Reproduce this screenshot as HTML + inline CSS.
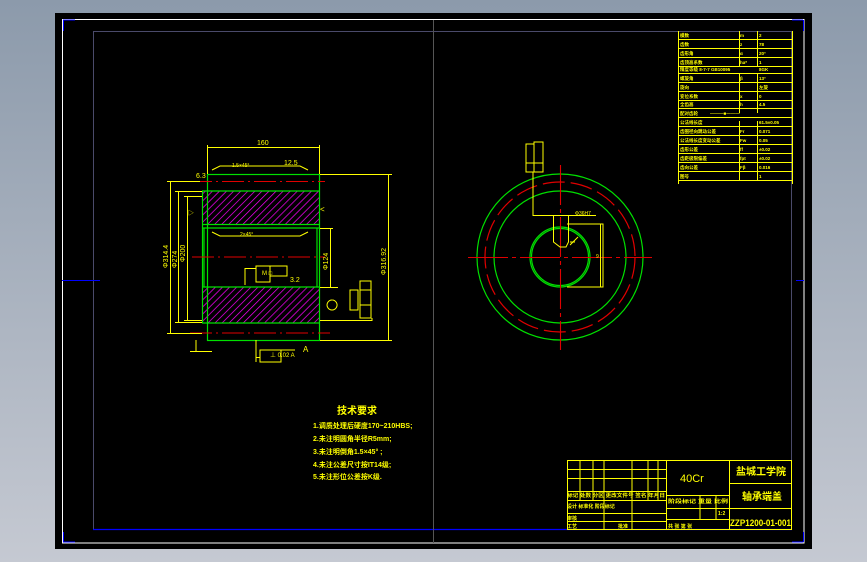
<!DOCTYPE html>
<html><head><meta charset="utf-8"><style>
html,body{margin:0;padding:0}
body{width:867px;height:562px;overflow:hidden;background:linear-gradient(#8c9aab,#c5c9d2)}
svg{display:block}
text{font-family:"Liberation Sans","Noto Sans CJK SC",sans-serif;fill:#ffff00}
</style></head><body>
<svg width="867" height="562" viewBox="0 0 867 562" xmlns="http://www.w3.org/2000/svg">
<defs>
<pattern id="h" width="5" height="5" patternUnits="userSpaceOnUse" patternTransform="rotate(45)">
<rect width="5" height="5" fill="#000"/><line x1="0" y1="0" x2="0" y2="5" stroke="#ff00ff" stroke-width="1.4"/>
</pattern>
</defs>
<rect x="55" y="13" width="757" height="536" fill="#000"/>
<rect x="62.5" y="19.5" width="741.5" height="523.5" fill="none" stroke="#fff" stroke-width="1"/>
<rect x="93.5" y="31.5" width="698" height="498" fill="none" stroke="#4a4a6a" stroke-width="1"/>
<line x1="93" y1="529.5" x2="792" y2="529.5" stroke="#0000ff" stroke-width="1.2"/>
<g stroke="#0000ff" stroke-width="1" fill="none">
<path d="M63 20H75M63.5 20V31M63 542H75M63.5 542V532M803 20H792M803.5 20V31M803 542H792M803.5 542V532"/>
<path d="M62 280.5H100M796 280.5H804"/>
</g>
<line x1="433.5" y1="20" x2="433.5" y2="543" stroke="#555" stroke-width="1"/>

<!-- left view -->
<rect x="202" y="191" width="118" height="33" fill="url(#h)"/>
<rect x="202" y="287" width="118" height="36" fill="url(#h)"/>
<g stroke="#00e000" stroke-width="1.2" fill="none">
<rect x="207.5" y="174.5" width="112" height="166"/>
<path d="M202 191H320M202 224.5H320M202 228H320M202 287H320M202 323H320M202.5 191V323M204 228V287M317 228V287"/>
</g>
<g stroke="#e00000" stroke-width="1" stroke-dasharray="22,4,2,4">
<path d="M190 181.5H325M192 257H325M190 333H330"/>
</g>
<g stroke="#ffff00" stroke-width="1" fill="none">
<path d="M207.5 145V174M319.5 145V174M207 147.5H320"/>
<path d="M170.5 181V333M167 181.5H200M167 333.5H202M178.5 191V323M175 191.5H202M175 322.5H202M187.5 196V320M184 196.5H202M184 320.5H202"/>
<path d="M320 174.5H392M320 340.5H392M388.5 174V340"/>
<path d="M320 228.5H333M320 287.5H333M330.5 228V287"/>
<path d="M212 170L220 166H300L308 170M212 232L220 236H300L308 232"/>
<path d="M245 268V285M245 268.5H256M256 266H270V282H256ZM270 266H287V276H270"/>
<path d="M256 340V362M256 357.5H260M260 350H281V362H260ZM262 350H295"/>
<path d="M360 281H371V318H360ZM360 290H371M360 305H371M350 290H358V310H350Z"/>
<path d="M320 320.5H372V318M332 300a5 5 0 1 0 0.1 0M326 287.5H338"/>
<path d="M196 340V352M190 351.5H212"/>
</g>
<text x="257" y="145" font-size="7">160</text>
<text x="232" y="167" font-size="5">1.5×45°</text>
<text x="240" y="236" font-size="5">2×45°</text>
<text x="284" y="165" font-size="7">12.5</text>
<text x="262" y="275" font-size="6">M □</text>
<text x="270" y="357" font-size="6">⊥ 0.02 A</text>
<text font-size="7" transform="translate(168,268) rotate(-90)">Φ314.4</text>
<text font-size="7" transform="translate(177,268) rotate(-90)">Φ274</text>
<text font-size="7" transform="translate(185,262) rotate(-90)">Φ200</text>
<text font-size="7" transform="translate(328,270) rotate(-90)">Φ124</text>
<text font-size="7" transform="translate(386,275) rotate(-90)">Φ316.92</text>
<text x="196" y="178" font-size="7">6.3</text>
<text x="188" y="215" font-size="6">▷</text>
<text x="290" y="282" font-size="7">3.2</text>
<text x="303" y="352" font-size="8">A</text>
<text x="320" y="212" font-size="8">&lt;</text>

<!-- right view -->
<g fill="none" stroke-width="1.2">
<circle cx="560" cy="257" r="83" stroke="#00e000"/>
<circle cx="560" cy="257" r="66" stroke="#00e000"/>
<circle cx="560" cy="257" r="75" stroke="#e00000" stroke-dasharray="22,6"/>
<circle cx="560" cy="257" r="30" stroke="#00e000"/>
<circle cx="560" cy="257" r="28.5" stroke="#00e000"/>
</g>
<g stroke="#e00000" stroke-width="1.1" stroke-dasharray="40,4,4,4">
<path d="M468 257.5H652M560.5 165V350"/>
</g>
<g stroke="#ffff00" stroke-width="1" fill="none">
<path d="M553.5 216V242L560 247H566L568.5 242V216M552 215.5H570"/>
<path d="M533 172V215.5H596M526 144H534V172H526ZM534 142H543V172H534ZM526 163H543"/>
<path d="M567 224H603V287H567M600.5 224V287"/>
<path d="M570 245L578 237M570 242H575"/>
</g>
<text x="575" y="215" font-size="5">Φ36H7</text>
<text x="596" y="258" font-size="5">9</text>

<!-- tech requirements -->
<text x="337" y="414" font-size="10" font-weight="bold">技术要求</text>
<g font-size="7" font-weight="bold">
<text x="313" y="428">1.调质处理后硬度170~210HBS;</text>
<text x="313" y="441">2.未注明圆角半径R5mm;</text>
<text x="313" y="454">3.未注明倒角1.5×45° ;</text>
<text x="313" y="467">4.未注公差尺寸按IT14级;</text>
<text x="313" y="479">5.未注形位公差按K级.</text>
</g>

<!-- title block -->
<g stroke="#ffff00" stroke-width="1" fill="none">
<rect x="567.5" y="460.5" width="224" height="69"/>
<path d="M580 460V500M593 460V500M604 460V530M632 460V530M648 460V500M658 460V500M666.5 460V530M729.5 460V530"/>
<path d="M567 469.5H666M567 478.5H666M567 491.5H666M567 500.5H666M567 513.5H666M567 521.5H666"/>
<path d="M729 483.5H792M729 508.5H792"/>
<path d="M666 495.5H729M666 508.5H729M666 519.5H729M700 495V519M716 495V519"/>
</g>
<text x="680" y="482" font-size="11" font-weight="normal">40Cr</text>
<text x="736" y="475" font-size="10" font-weight="bold">盐城工学院</text>
<text x="742" y="500" font-size="10" font-weight="bold">轴承端盖</text>
<text x="730" y="526" font-size="9" font-weight="bold" textLength="61" lengthAdjust="spacingAndGlyphs">ZZP1200-01-001</text>
<g font-size="5" font-weight="bold">
<text x="567" y="497" textLength="98" lengthAdjust="spacingAndGlyphs">标记 处数 分区 更改文件号 签名 年月日</text>
<text x="567" y="508">设计 标准化 阶段标记</text>
<text x="567" y="520">审核</text>
<text x="567" y="528">工艺</text>
<text x="618" y="528">批准</text>
<text x="668" y="503" textLength="60" lengthAdjust="spacingAndGlyphs">阶段标记  重量  比例</text>
<text x="718" y="515">1:2</text>
<text x="668" y="528">共    张  第    张</text>
</g>

<!-- top-right table -->
<g stroke="#ffff00" stroke-width="1" fill="none">
<path d="M678.5 31V184M792.5 31V184M739.5 31V67M739.5 73V113M739.5 121V180M757.5 31V67M757.5 73V113M757.5 121V180"/>
<path d="M678 39.5H792M678 48.5H792M678 57.5H792M678 66.5H792M678 73.5H792M678 82.5H792M678 91.5H792M678 100.5H792M678 108.5H792M678 117.5H792M678 126.5H792M678 135.5H792M678 144.5H792M678 153.5H792M678 162.5H792M678 171.5H792M678 180.5H792"/>
</g>
<g font-size="4.5" font-weight="bold">
<text x="680" y="37">模数</text><text x="740" y="37">m</text><text x="759" y="37">2</text>
<text x="680" y="46">齿数</text><text x="740" y="46">z</text><text x="759" y="46">78</text>
<text x="680" y="55">齿形角</text><text x="740" y="55">α</text><text x="759" y="55">20°</text>
<text x="680" y="64">齿顶高系数</text><text x="740" y="64">ha*</text><text x="759" y="64">1</text>
<text x="680" y="71">精度等级 8-7-7 GB10095</text><text x="759" y="71">8GK</text>
<text x="680" y="80">螺旋角</text><text x="740" y="80">β</text><text x="759" y="80">13°</text>
<text x="680" y="89">旋向</text><text x="759" y="89">左旋</text>
<text x="680" y="98">变位系数</text><text x="740" y="98">x</text><text x="759" y="98">0</text>
<text x="680" y="106">全齿高</text><text x="740" y="106">h</text><text x="759" y="106">4.5</text>
<text x="680" y="115">配对齿轮</text><text x="710" y="115">———■———</text>
<text x="680" y="124">公法线长度</text><text x="759" y="124">61.5±0.05</text>
<text x="680" y="133">齿圈径向跳动公差</text><text x="740" y="133">Fr</text><text x="759" y="133">0.071</text>
<text x="680" y="142">公法线长度变动公差</text><text x="740" y="142">Fw</text><text x="759" y="142">0.05</text>
<text x="680" y="151">齿形公差</text><text x="740" y="151">ff</text><text x="759" y="151">±0.02</text>
<text x="680" y="160">齿距极限偏差</text><text x="740" y="160">fpt</text><text x="759" y="160">±0.02</text>
<text x="680" y="169">齿向公差</text><text x="740" y="169">Fβ</text><text x="759" y="169">0.016</text>
<text x="680" y="178">图号</text><text x="759" y="178">1</text>
</g>
</svg>
</body></html>
